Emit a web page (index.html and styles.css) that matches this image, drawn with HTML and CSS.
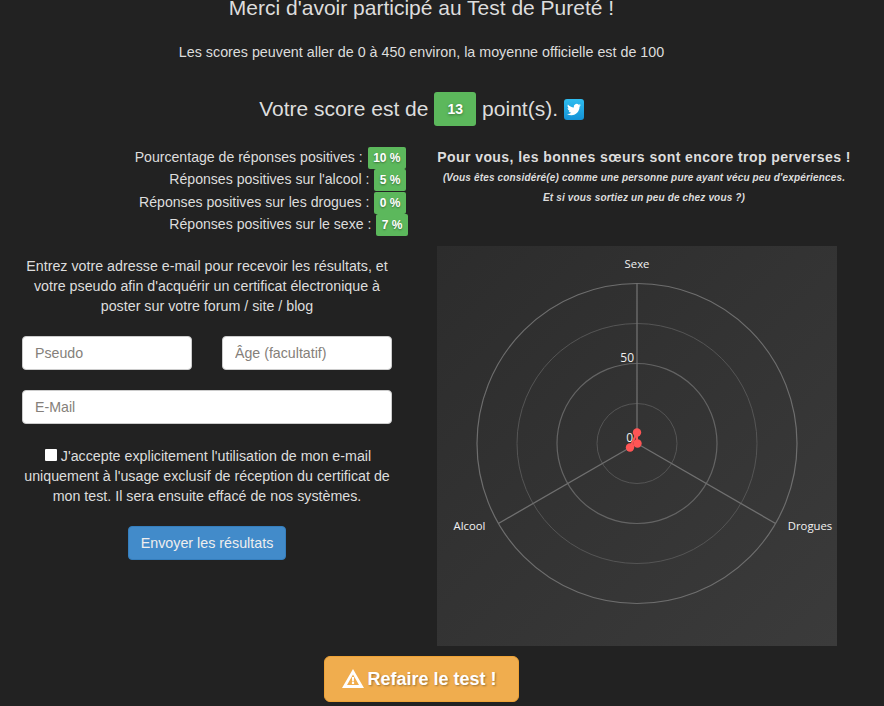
FILE: index.html
```html
<!DOCTYPE html>
<html lang="fr">
<head>
    <meta charset="UTF-8">
    <title>Test de Pureté</title>
    <link rel="stylesheet" href="styles.css">
</head>
<body>
    <h2 class="title">Merci d'avoir participé au Test de Pureté !</h2>
    <p class="range">Les scores peuvent aller de 0 à 450 environ, la moyenne officielle est de 100</p>

    <h2 class="score">
        Votre score est de <span class="score-badge">13</span> point(s).
        <svg class="twitter" viewBox="0 0 20 21" width="20" height="21">
            <defs>
                <linearGradient id="tw" x1="0" y1="0" x2="0" y2="1">
                    <stop offset="0" stop-color="#2fbdf0"/>
                    <stop offset="1" stop-color="#1492d6"/>
                </linearGradient>
            </defs>
            <rect width="20" height="21" rx="3" fill="url(#tw)"/>
            <path transform="translate(3 3.6) scale(0.58)" fill="#fff" d="M23.953 4.57a10 10 0 01-2.825.775 4.958 4.958 0 002.163-2.723c-.951.555-2.005.959-3.127 1.184a4.92 4.92 0 00-8.384 4.482C7.69 8.095 4.067 6.13 1.64 3.162a4.822 4.822 0 00-.666 2.475c0 1.71.87 3.213 2.188 4.096a4.904 4.904 0 01-2.228-.616v.06a4.923 4.923 0 003.946 4.827 4.996 4.996 0 01-2.212.085 4.936 4.936 0 004.604 3.417 9.867 9.867 0 01-6.102 2.105c-.39 0-.779-.023-1.17-.067a13.995 13.995 0 007.557 2.209c9.053 0 13.998-7.496 13.998-13.985 0-.21 0-.42-.015-.63A9.935 9.935 0 0024 4.59z"/>
        </svg>
    </h2>

    <div class="cols">
        <div class="left">
            <div class="stats">
                <div class="stat">Pourcentage de réponses positives : <span class="pct">10 %</span></div>
                <div class="stat">Réponses positives sur l'alcool : <span class="pct">5 %</span></div>
                <div class="stat">Réponses positives sur les drogues : <span class="pct">0 %</span></div>
                <div class="stat stat-last">Réponses positives sur le sexe : <span class="pct">7 %</span></div>
            </div>

            <p class="intro">Entrez votre adresse e-mail pour recevoir les résultats, et votre pseudo afin d'acquérir un certificat électronique à poster sur votre forum / site / blog</p>

            <form class="form">
                <div class="form-row">
                    <input class="field" type="text" placeholder="Pseudo">
                    <input class="field" type="text" placeholder="Âge (facultatif)">
                </div>
                <input class="field" type="text" placeholder="E-Mail">
                <p class="consent"><span class="check"></span> J'accepte explicitement l'utilisation de mon e-mail uniquement à l'usage exclusif de réception du certificat de mon test. Il sera ensuite effacé de nos systèmes.</p>
                <button class="send" type="button">Envoyer les résultats</button>
            </form>
        </div>

        <div class="right">
            <div class="verdict">Pour vous, les bonnes sœurs sont encore trop perverses !</div>
            <div class="note">(Vous êtes considéré(e) comme une personne pure ayant vécu peu d'expériences.</div>
            <div class="note">Et si vous sortiez un peu de chez vous ?)</div>

            <svg class="chart" viewBox="0 0 400 400" width="400" height="400">
                <defs>
                    <linearGradient id="chartbg" x1="0" y1="0" x2="1" y2="1">
                        <stop offset="0" stop-color="#2c2c2c"/>
                        <stop offset="1" stop-color="#3b3b3b"/>
                    </linearGradient>
                </defs>
                <rect width="400" height="400" fill="url(#chartbg)"/>
                <g fill="none">
                    <circle cx="200" cy="197.5" r="40" stroke="#555"/>
                    <circle cx="200" cy="197.5" r="80" stroke="#646464" stroke-width="1.2"/>
                    <circle cx="200" cy="197.5" r="120" stroke="#555"/>
                    <circle cx="200" cy="197.5" r="160" stroke="#6e6e6e" stroke-width="1.2"/>
                </g>
                <g stroke="#707070" stroke-width="1.3">
                    <line x1="200" y1="197.5" x2="200" y2="37.5"/>
                    <line x1="200" y1="197.5" x2="61.4" y2="277.5"/>
                    <line x1="200" y1="197.5" x2="338.6" y2="277.5"/>
                </g>
                <g class="chart-label">
                    <text x="200" y="22" text-anchor="middle">Sexe</text>
                    <text x="32.5" y="284" text-anchor="middle">Alcool</text>
                    <text x="373" y="284" text-anchor="middle">Drogues</text>
                </g>
                <g class="chart-tick">
                    <text x="197" y="116" text-anchor="end">50</text>
                    <text x="196" y="196" text-anchor="end">0</text>
                </g>
                <polygon points="200,186.5 200,197.5 193,201.5" fill="rgba(255,85,85,0.3)" stroke="#f55" stroke-width="2"/>
                <g fill="#f55">
                    <circle cx="200" cy="186.5" r="4.2"/>
                    <circle cx="200.5" cy="197.5" r="4.2"/>
                    <circle cx="193" cy="201.5" r="4.2"/>
                </g>
            </svg>
        </div>
    </div>

    <div class="restart-wrap">
        <button class="restart" type="button">
            <svg viewBox="0 0 22 19" width="22" height="19">
                <path fill="#fff" fill-rule="evenodd" d="M11 0 L22 19 H0 Z M11 5.5 L5 16 H17 Z M9.9 8 H12.1 L11.8 12.4 H10.2 Z M9.9 13 H12.1 V15 H9.9 Z"/>
            </svg>
            Refaire le test !
        </button>
    </div>
</body>
</html>
```

FILE: styles.css
```css
body {
    margin: 0;
    background-color: #222;
    color: #ddd;
    font-family: "Liberation Sans", Arial, sans-serif;
    font-size: 14.3px;
    line-height: 20px;
    text-align: center;
    overflow-x: hidden;
}
.title {
    margin: 0;
    font-size: 21px;
    font-weight: 400;
    line-height: 16px;
    padding-right: 41px;
}
.range {
    margin: 26px 0 0;
    padding-right: 41px;
}
.score {
    margin: 30px 0 0;
    font-size: 21px;
    font-weight: 400;
    line-height: 34px;
    padding-right: 41px;
}
.score-badge {
    display: inline-block;
    width: 42px;
    height: 34px;
    background: #5cb85c;
    border-radius: 3px;
    color: #fff;
    font-size: 14px;
    font-weight: 700;
    line-height: 34px;
    text-shadow: 0 1px 3px rgba(0, 0, 0, 0.4);
    vertical-align: top;
}
.twitter {
    vertical-align: -4px;
}
.cols {
    display: flex;
    gap: 23px;
    margin-top: 21px;
}
.left {
    width: 414px;
    flex: none;
}
.right {
    width: 414px;
    flex: none;
}
.stats {
    text-align: right;
    padding-right: 8px;
    font-size: 14.1px;
}
.stat {
    height: 22.4px;
    line-height: 20px;
}
.stat-last {
    margin-right: -2px;
}
.pct {
    display: inline-block;
    padding: 0 5.5px;
    height: 22px;
    background: #5cb85c;
    border-radius: 2px;
    color: #fff;
    font-size: 12px;
    font-weight: 700;
    line-height: 22px;
    text-shadow: 0 1px 2px rgba(0, 0, 0, 0.4);
    vertical-align: top;
    margin-left: 1px;
}
.intro {
    margin: 19px 0 0;
    padding: 0 20px;
    font-size: 14.27px;
}
.form {
    margin: 20px 22px 0;
}
.form-row {
    display: flex;
    gap: 30px;
    margin-bottom: 20px;
}
.field {
    display: block;
    box-sizing: border-box;
    width: 100%;
    min-width: 0;
    height: 34px;
    padding: 6px 12px;
    background: #fff;
    border: 1px solid #ccc;
    border-radius: 4px;
    font-family: inherit;
    font-size: 14.2px;
}
.field::placeholder {
    color: #857f7a;
    opacity: 1;
}
.consent {
    margin: 22px 0 0;
    font-size: 14.25px;
}
.check {
    display: inline-block;
    width: 12px;
    height: 12px;
    margin-left: 2px;
    background: #fff;
    border-radius: 1px;
}
.send {
    display: block;
    margin: 20px auto 0;
    width: 158px;
    height: 34px;
    background: #428bca;
    border: 1px solid #357ebd;
    border-radius: 4px;
    color: #eee;
    font-family: inherit;
    font-size: 14.3px;
}
.verdict {
    font-size: 14px;
    font-weight: 700;
    letter-spacing: 0.44px;
    line-height: 22px;
    margin-top: -1px;
}
.note {
    font-size: 10px;
    font-style: italic;
    font-weight: 700;
    letter-spacing: 0.16px;
    line-height: 20px;
}
.chart {
    display: block;
    margin-top: 38px;
}
.chart-label text {
    fill: #f2f2f2;
    font-family: "Open Sans", sans-serif;
    font-size: 11.3px;
}
.chart-tick text {
    fill: #eee;
    font-family: "Open Sans", sans-serif;
    font-size: 12px;
}
.restart-wrap {
    margin-top: 10px;
    padding-bottom: 4px;
    padding-right: 41px;
}
.restart {
    display: inline-block;
    width: 195px;
    height: 46px;
    background: #f0ad4e;
    border: 1px solid #eea236;
    border-radius: 6px;
    color: #fff;
    font-family: inherit;
    font-size: 18px;
    font-weight: 700;
    text-shadow: 1px 1px 2px rgba(0, 0, 0, 0.35);
    padding: 0 4px 0 0;
}
.restart svg {
    vertical-align: -3px;
    margin-right: -2px;
}
```
